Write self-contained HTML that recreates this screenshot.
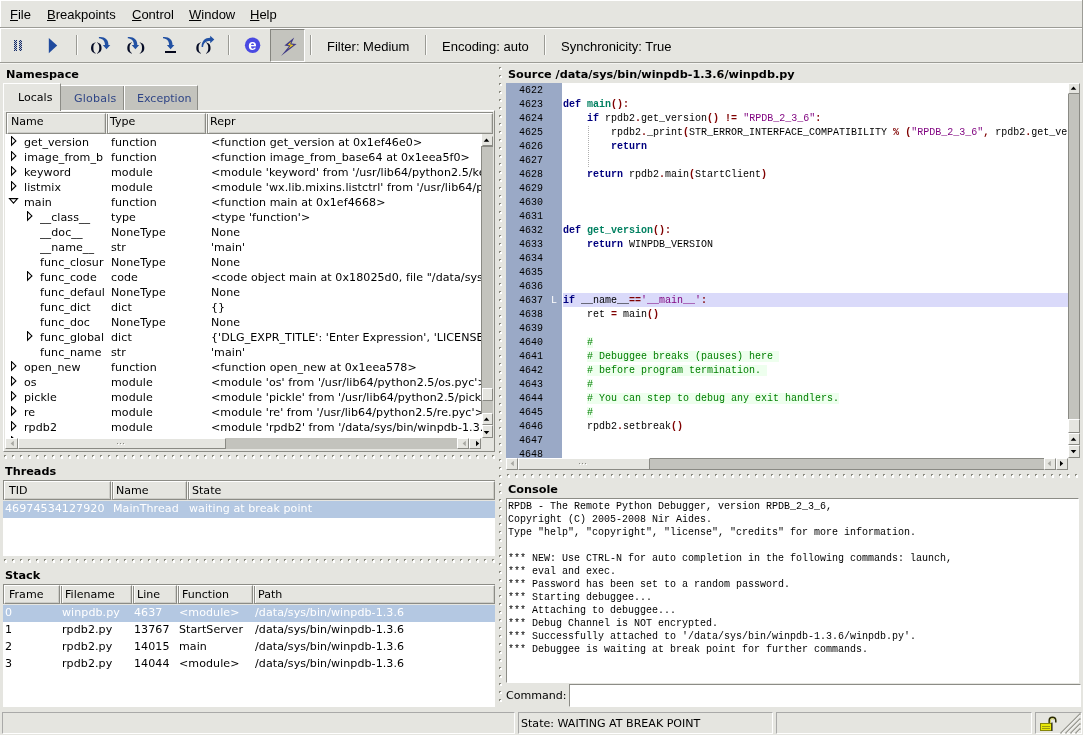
<!DOCTYPE html>
<html lang="en"><head><meta charset="utf-8"><title>Winpdb</title>
<style>
*{box-sizing:border-box;margin:0;padding:0}
html,body{width:1083px;height:735px;overflow:hidden;background:#e5e5e0}
body{position:relative;font-family:"DejaVu Sans","Liberation Sans",sans-serif;font-size:11.07px;color:#000;-webkit-font-smoothing:antialiased}
#app{position:absolute;left:0;top:0;width:1083px;height:735px;will-change:transform}
.abs{position:absolute}
.ui{font-family:"Liberation Sans",sans-serif;font-size:13px}
.lbl{position:absolute;font-weight:bold;font-size:11.25px;white-space:nowrap;line-height:14px}
.menu span{position:absolute;top:7px;line-height:15px;white-space:nowrap}
.menu u{text-decoration:underline;text-underline-offset:1px}
.hline{position:absolute;left:0;width:1083px;height:1px}
.tsep{position:absolute;top:35px;width:2px;height:20px;border-left:1px solid #9a9a94;border-right:1px solid #fbfbf9}
.tb{position:absolute;top:39px;line-height:15px;white-space:nowrap}
.hdr{position:absolute;height:20px;background:#e5e5e0;border:1px solid;border-color:#fff #8e8e88 #8e8e88 #fff;box-shadow:0 0 0 1px #8e8e88 inset}
.hcell{position:absolute;top:0;height:21px;border-top:1px solid #fff;border-left:1px solid #fff;border-bottom:1px solid #8c8c86;border-right:1px solid #8c8c86;background:#e5e5e0;box-shadow:inset -1px -1px 0 #cdcdc8;padding-left:3px;line-height:15px;white-space:nowrap;overflow:hidden}
.hcell.n{border-left-color:#f6f6f3;box-shadow:inset 1px 0 0 #8c8c86,inset 2px 0 0 #fafaf8,inset -1px -1px 0 #cdcdc8}
.white{position:absolute;background:#fff;overflow:hidden}
.row{position:absolute;left:0;white-space:nowrap;height:15px;line-height:15px;letter-spacing:0.07px}
.row span{position:absolute;top:0;white-space:nowrap}
.code{font-family:"Liberation Mono",monospace;font-size:10px;white-space:pre}
.cl{position:absolute;left:0;height:14px;line-height:14px;white-space:pre}
.k{color:#00007f;font-weight:bold}.f{color:#008060;font-weight:bold}.o{color:#7f0000;font-weight:bold}.s{color:#7f007f}.c{color:#007f00;background:#eeffee}
.sbv{position:absolute;width:13px;background:#c3c3bd}
.sbh{position:absolute;height:12px;background:#c3c3bd}
.btn{position:absolute;background:#e5e5e0;border:1px solid;border-color:#fff #8a8a84 #8a8a84 #fff}
.sashh{position:absolute;height:4px;background-image:linear-gradient(90deg,transparent 1px,#fff 1px,#fff 3px,transparent 3px),linear-gradient(90deg,#8a8a80 2px,transparent 2px);background-size:8px 3px,8px 2px;background-position:0 1px,0 0;background-repeat:repeat-x}
.sashv{position:absolute;width:3px;background-image:linear-gradient(180deg,transparent 1px,#fff 1px,#fff 3px,transparent 3px),linear-gradient(180deg,#8a8a80 2px,transparent 2px);background-size:2px 8px,2px 8px;background-position:1px 0,0 0;background-repeat:repeat-y}
.sf{position:absolute;top:712px;height:22px;border:1px solid;border-color:#a9a9a8 #fff #fff #a9a9a8}
</style></head>
<body>
<div id="app">
<div class="menu ui">
<span style="left:10px"><u>F</u>ile</span>
<span style="left:47px"><u>B</u>reakpoints</span>
<span style="left:132px"><u>C</u>ontrol</span>
<span style="left:189px"><u>W</u>indow</span>
<span style="left:250px"><u>H</u>elp</span>
</div>
<div class="hline" style="top:27px;background:#9c9c96"></div>
<div class="hline" style="top:28px;background:#fff"></div>
<div class="hline" style="top:62px;background:#9c9c96"></div>
<div class="hline" style="top:63px;background:#f4f4f1"></div>
<div class="hline" style="top:0;background:#fff"></div>
<div class="abs" style="left:0;top:0;width:1px;height:27px;background:#fff"></div><div class="abs" style="left:0;top:28px;width:1px;height:34px;background:#fff"></div>
<div class="abs" style="left:1082px;top:0;width:1px;height:63px;background:#9c9c96"></div>
<div class="tsep" style="left:76px"></div>
<div class="tsep" style="left:228px"></div>
<div class="abs" style="left:270px;top:29px;width:35px;height:33px;background:#c4c4be;border:1px solid;border-color:#85857f #fff #fff #85857f"></div>
<svg class="abs" style="left:0;top:28px" width="320" height="36" viewBox="0 28 320 36">
<defs><pattern id="dith" width="2" height="2" patternUnits="userSpaceOnUse"><rect width="2" height="2" fill="#c4c9d2"/><rect width="1" height="1" fill="#132a66"/><rect x="1" y="1" width="1" height="1" fill="#132a66"/></pattern></defs>
<rect x="14" y="40" width="3" height="11" fill="url(#dith)"/><rect x="19" y="40" width="3" height="11" fill="url(#dith)"/>
<path d="M48.8 38 L57.2 45.6 L48.8 53.2 Z" fill="#1f4a9e"/>
<text transform="translate(90.2 51.1) scale(1.5 1)" font-family="Liberation Serif,serif" font-weight="bold" font-size="11.7" fill="#060c26">(</text><text transform="translate(96.4 51.1) scale(1.5 1)" font-family="Liberation Serif,serif" font-weight="bold" font-size="11.7" fill="#060c26">)</text>
<path d="M98.9 37.1 C104.5 36.4 108.7 39.6 108.4 45.1 L110.3 45.1 L106.5 49.3 L102.8 45.1 L105 45.1 C105.1 41.2 102.8 38.7 98.9 38.3 Z" fill="#2251a3"/>
<text transform="translate(126.6 51.1) scale(1.5 1)" font-family="Liberation Serif,serif" font-weight="bold" font-size="11.7" fill="#060c26">(</text><text transform="translate(139.2 51.1) scale(1.5 1)" font-family="Liberation Serif,serif" font-weight="bold" font-size="11.7" fill="#060c26">)</text>
<path d="M98.9 37.1 C104.5 36.4 108.7 39.6 108.4 45.1 L110.3 45.1 L106.5 49.3 L102.8 45.1 L105 45.1 C105.1 41.2 102.8 38.7 98.9 38.3 Z" transform="translate(28.9 0)" fill="#2251a3"/>
<path d="M98.9 37.1 C104.5 36.4 108.7 39.6 108.4 45.1 L110.3 45.1 L106.5 49.3 L102.8 45.1 L105 45.1 C105.1 41.2 102.8 38.7 98.9 38.3 Z" transform="translate(64.1 0)" fill="#2251a3"/>
<rect x="165" y="51" width="11" height="2" fill="#05081c"/>
<text transform="translate(195.4 51.1) scale(1.5 1)" font-family="Liberation Serif,serif" font-weight="bold" font-size="11.7" fill="#060c26">(</text><text transform="translate(205.4 51.1) scale(1.5 1)" font-family="Liberation Serif,serif" font-weight="bold" font-size="11.7" fill="#060c26">)</text>
<path d="M201.6 46.9 C201.6 41 205 37.8 210.2 37.8 L210.2 35.7 L214.3 39.5 L210.2 43.3 L210.2 41.1 C206 41.1 203.5 43 203.1 46.9 Z" fill="#2251a3"/>
<circle cx="252.6" cy="45.3" r="7.7" fill="#4a4ae2"/><text x="252.5" y="49.7" text-anchor="middle" font-family="Liberation Sans,sans-serif" font-weight="bold" font-size="15" fill="#fff">e</text>
<path d="M294.2 37.4 L284.4 45.4 L289 46.2 L281 56 L296.6 44.1 L291.4 43.4 Z" fill="#3f3a86"/>
<path d="M291.2 41.6 L287.6 44.9 L290.6 45.5 L288 49 L293.6 44.9 L290 44.2 Z" fill="#f2cf1c"/>
</svg>
<div class="tsep" style="left:310px"></div>
<div class="tb ui" style="left:327px">Filter: Medium</div>
<div class="tsep" style="left:425px"></div>
<div class="tb ui" style="left:442px">Encoding: auto</div>
<div class="tsep" style="left:544px"></div>
<div class="tb ui" style="left:561px">Synchronicity: True</div>
<div class="lbl" style="left:6px;top:68px">Namespace</div>
<div class="abs" style="left:60px;top:85px;width:138px;height:25px;background:#c3c3bd;border-top:1px solid #fff;border-right:1px solid #8c8c86"></div>
<div class="abs" style="left:123px;top:86px;width:1px;height:24px;background:#8c8c86"></div><div class="abs" style="left:124px;top:86px;width:1px;height:24px;background:#fff"></div>
<div class="abs" style="left:3px;top:110px;width:492px;height:342px;border:1px solid;border-color:#fff #8c8c86 #8c8c86 #fff"></div>
<div class="abs" style="left:4px;top:111px;width:490px;height:1px;background:#f2f2ef"></div>
<div class="abs" style="left:3px;top:83px;width:58px;height:28px;background:#e5e5e0;border:1px solid;border-color:#fff #8c8c86 #e5e5e0 #fff;border-bottom:none"></div>
<div class="abs" style="left:18px;top:91px;line-height:14px">Locals</div>
<div class="abs" style="left:74px;top:92px;line-height:14px;color:#2f4586;letter-spacing:0.2px">Globals</div>
<div class="abs" style="left:137px;top:92px;line-height:14px;color:#2f4586">Exception</div>
<div class="abs" style="left:6px;top:112px;width:487px;height:22px;border-top:1px solid #8c8c86;border-left:1px solid #8c8c86"><div class="hcell" style="left:0px;width:99px;height:21px;padding-left:3px;line-height:15px">Name</div><div class="hcell n" style="left:99px;width:100px;height:21px;padding-left:3px;line-height:15px">Type</div><div class="hcell n" style="left:199px;width:287px;height:21px;padding-left:3px;line-height:15px">Repr</div></div>
<div class="white" style="left:5px;top:134px;width:477px;height:304px">
<div class="row" style="top:1px"><svg class="abs" style="left:6px;top:1px" width="7" height="11" viewBox="0 0 7 11"><path d="M0.5 0.6 L4.9 4.9 L0.5 9.2 Z" fill="none" stroke="#000" stroke-width="1.1"/></svg><span style="left:19px;width:81px;overflow:hidden">get_version</span><span style="left:106px">function</span><span style="left:206px">&lt;function get_version at 0x1ef46e0&gt;</span></div>
<div class="row" style="top:16px"><svg class="abs" style="left:6px;top:1px" width="7" height="11" viewBox="0 0 7 11"><path d="M0.5 0.6 L4.9 4.9 L0.5 9.2 Z" fill="none" stroke="#000" stroke-width="1.1"/></svg><span style="left:19px;width:81px;overflow:hidden">image_from_b</span><span style="left:106px">function</span><span style="left:206px">&lt;function image_from_base64 at 0x1eea5f0&gt;</span></div>
<div class="row" style="top:31px"><svg class="abs" style="left:6px;top:1px" width="7" height="11" viewBox="0 0 7 11"><path d="M0.5 0.6 L4.9 4.9 L0.5 9.2 Z" fill="none" stroke="#000" stroke-width="1.1"/></svg><span style="left:19px;width:81px;overflow:hidden">keyword</span><span style="left:106px">module</span><span style="left:206px">&lt;module &#x27;keyword&#x27; from &#x27;/usr/lib64/python2.5/keyword.pyc&#x27;&gt;</span></div>
<div class="row" style="top:46px"><svg class="abs" style="left:6px;top:1px" width="7" height="11" viewBox="0 0 7 11"><path d="M0.5 0.6 L4.9 4.9 L0.5 9.2 Z" fill="none" stroke="#000" stroke-width="1.1"/></svg><span style="left:19px;width:81px;overflow:hidden">listmix</span><span style="left:106px">module</span><span style="left:206px">&lt;module &#x27;wx.lib.mixins.listctrl&#x27; from &#x27;/usr/lib64/python2.5/site-packages</span></div>
<div class="row" style="top:61px"><svg class="abs" style="left:3px;top:3px" width="12" height="7" viewBox="0 0 12 7"><path d="M1.5 0.6 L9.5 0.6 L5.5 5.2 Z" fill="none" stroke="#000" stroke-width="1.1"/></svg><span style="left:19px;width:81px;overflow:hidden">main</span><span style="left:106px">function</span><span style="left:206px">&lt;function main at 0x1ef4668&gt;</span></div>
<div class="row" style="top:76px"><svg class="abs" style="left:22px;top:1px" width="7" height="11" viewBox="0 0 7 11"><path d="M0.5 0.6 L4.9 4.9 L0.5 9.2 Z" fill="none" stroke="#000" stroke-width="1.1"/></svg><span style="left:35px;width:65px;overflow:hidden">__class__</span><span style="left:106px">type</span><span style="left:206px">&lt;type &#x27;function&#x27;&gt;</span></div>
<div class="row" style="top:91px"><span style="left:35px;width:65px;overflow:hidden">__doc__</span><span style="left:106px">NoneType</span><span style="left:206px">None</span></div>
<div class="row" style="top:106px"><span style="left:35px;width:65px;overflow:hidden">__name__</span><span style="left:106px">str</span><span style="left:206px">&#x27;main&#x27;</span></div>
<div class="row" style="top:121px"><span style="left:35px;width:65px;overflow:hidden">func_closur</span><span style="left:106px">NoneType</span><span style="left:206px">None</span></div>
<div class="row" style="top:136px"><svg class="abs" style="left:22px;top:1px" width="7" height="11" viewBox="0 0 7 11"><path d="M0.5 0.6 L4.9 4.9 L0.5 9.2 Z" fill="none" stroke="#000" stroke-width="1.1"/></svg><span style="left:35px;width:65px;overflow:hidden">func_code</span><span style="left:106px">code</span><span style="left:206px">&lt;code object main at 0x18025d0, file &quot;/data/sys/bin/winpdb</span></div>
<div class="row" style="top:151px"><span style="left:35px;width:65px;overflow:hidden">func_defaul</span><span style="left:106px">NoneType</span><span style="left:206px">None</span></div>
<div class="row" style="top:166px"><span style="left:35px;width:65px;overflow:hidden">func_dict</span><span style="left:106px">dict</span><span style="left:206px">{}</span></div>
<div class="row" style="top:181px"><span style="left:35px;width:65px;overflow:hidden">func_doc</span><span style="left:106px">NoneType</span><span style="left:206px">None</span></div>
<div class="row" style="top:196px"><svg class="abs" style="left:22px;top:1px" width="7" height="11" viewBox="0 0 7 11"><path d="M0.5 0.6 L4.9 4.9 L0.5 9.2 Z" fill="none" stroke="#000" stroke-width="1.1"/></svg><span style="left:35px;width:65px;overflow:hidden">func_global</span><span style="left:106px">dict</span><span style="left:206px">{&#x27;DLG_EXPR_TITLE&#x27;: &#x27;Enter Expression&#x27;, &#x27;LICENSE_NOTICE&#x27;: &#x27;</span></div>
<div class="row" style="top:211px"><span style="left:35px;width:65px;overflow:hidden">func_name</span><span style="left:106px">str</span><span style="left:206px">&#x27;main&#x27;</span></div>
<div class="row" style="top:226px"><svg class="abs" style="left:6px;top:1px" width="7" height="11" viewBox="0 0 7 11"><path d="M0.5 0.6 L4.9 4.9 L0.5 9.2 Z" fill="none" stroke="#000" stroke-width="1.1"/></svg><span style="left:19px;width:81px;overflow:hidden">open_new</span><span style="left:106px">function</span><span style="left:206px">&lt;function open_new at 0x1eea578&gt;</span></div>
<div class="row" style="top:241px"><svg class="abs" style="left:6px;top:1px" width="7" height="11" viewBox="0 0 7 11"><path d="M0.5 0.6 L4.9 4.9 L0.5 9.2 Z" fill="none" stroke="#000" stroke-width="1.1"/></svg><span style="left:19px;width:81px;overflow:hidden">os</span><span style="left:106px">module</span><span style="left:206px">&lt;module &#x27;os&#x27; from &#x27;/usr/lib64/python2.5/os.pyc&#x27;&gt;</span></div>
<div class="row" style="top:256px"><svg class="abs" style="left:6px;top:1px" width="7" height="11" viewBox="0 0 7 11"><path d="M0.5 0.6 L4.9 4.9 L0.5 9.2 Z" fill="none" stroke="#000" stroke-width="1.1"/></svg><span style="left:19px;width:81px;overflow:hidden">pickle</span><span style="left:106px">module</span><span style="left:206px">&lt;module &#x27;pickle&#x27; from &#x27;/usr/lib64/python2.5/pickle.pyc&#x27;&gt;</span></div>
<div class="row" style="top:271px"><svg class="abs" style="left:6px;top:1px" width="7" height="11" viewBox="0 0 7 11"><path d="M0.5 0.6 L4.9 4.9 L0.5 9.2 Z" fill="none" stroke="#000" stroke-width="1.1"/></svg><span style="left:19px;width:81px;overflow:hidden">re</span><span style="left:106px">module</span><span style="left:206px">&lt;module &#x27;re&#x27; from &#x27;/usr/lib64/python2.5/re.pyc&#x27;&gt;</span></div>
<div class="row" style="top:286px"><svg class="abs" style="left:6px;top:1px" width="7" height="11" viewBox="0 0 7 11"><path d="M0.5 0.6 L4.9 4.9 L0.5 9.2 Z" fill="none" stroke="#000" stroke-width="1.1"/></svg><span style="left:19px;width:81px;overflow:hidden">rpdb2</span><span style="left:106px">module</span><span style="left:206px">&lt;module &#x27;rpdb2&#x27; from &#x27;/data/sys/bin/winpdb-1.3.6/rpdb2.py&#x27;&gt;</span></div>
<div class="row" style="top:301px"><svg class="abs" style="left:6px;top:1px" width="7" height="11" viewBox="0 0 7 11"><path d="M0.5 0.6 L4.9 4.9 L0.5 9.2 Z" fill="none" stroke="#000" stroke-width="1.1"/></svg><span style="left:19px;width:81px;overflow:hidden">socket</span><span style="left:106px">module</span><span style="left:206px">&lt;module &#x27;socket&#x27; from &#x27;/usr/lib64/python2.5/socket.pyc&#x27;&gt;</span></div>
</div>
<div class="sbv" style="left:481px;top:146px;width:12px;height:267px;border-left:1px solid #8a8a84;border-top:1px solid #8a8a84"></div>
<div class="btn" style="left:482px;top:136px;width:11px;height:10px;border-top-color:#e5e5e0;border-left-color:#e5e5e0"></div>
<div class="btn" style="left:482px;top:388px;width:11px;height:13px"></div>
<div class="btn" style="left:482px;top:413px;width:11px;height:12px"></div>
<div class="btn" style="left:482px;top:425px;width:11px;height:13px"></div>
<svg class="abs" style="left:483px;top:137px" width="7" height="7" viewBox="0 0 7 7"><path d="M0.7 4.8 L3.5 1.6 L6.3 4.8 Z" fill="#000"/></svg>
<svg class="abs" style="left:483px;top:416px" width="7" height="7" viewBox="0 0 7 7"><path d="M0.7 4.8 L3.5 1.6 L6.3 4.8 Z" fill="#000"/></svg>
<svg class="abs" style="left:483px;top:429px" width="7" height="7" viewBox="0 0 7 7"><path d="M0.7 2 L3.5 5.2 L6.3 2 Z" fill="#000"/></svg>
<div class="sbh" style="left:5px;top:438px;width:477px;height:11px"></div>
<div class="btn" style="left:5px;top:438px;width:13px;height:11px"></div>
<div class="btn" style="left:18px;top:438px;width:208px;height:11px"></div>
<div class="btn" style="left:457px;top:438px;width:12px;height:11px"></div>
<div class="btn" style="left:469px;top:438px;width:12px;height:11px"></div>
<svg class="abs" style="left:9px;top:440px" width="7" height="7" viewBox="0 0 7 7"><path d="M4.8 0.7 L1.6 3.5 L4.8 6.3 Z" fill="#a8a8a2"/></svg>
<svg class="abs" style="left:461px;top:440px" width="7" height="7" viewBox="0 0 7 7"><path d="M4.8 0.7 L1.6 3.5 L4.8 6.3 Z" fill="#a8a8a2"/></svg>
<svg class="abs" style="left:474px;top:440px" width="7" height="7" viewBox="0 0 7 7"><path d="M2 0.7 L5.2 3.5 L2 6.3 Z" fill="#000"/></svg>
<svg class="abs" style="left:117px;top:443px" width="9" height="2" viewBox="0 0 9 2"><path d="M0 0.5h1M3 0.5h1M6 0.5h1" stroke="#8a8a84"/><path d="M1 1.5h1M4 1.5h1M7 1.5h1" stroke="#fff"/></svg>
<div class="abs" style="left:481px;top:438px;width:13px;height:13px;background:#e5e5e0"></div>
<div class="sashh" style="left:4px;top:455px;width:491px"></div>
<div class="sashh" style="left:4px;top:559px;width:491px"></div>
<div class="sashv" style="left:499px;top:67px;height:640px"></div>
<div class="sashh" style="left:507px;top:474px;width:571px"></div>
<div class="lbl" style="left:5px;top:465px">Threads</div>
<div class="abs" style="left:3px;top:480px;width:492px;height:20px;border-top:1px solid #8c8c86;border-left:1px solid #8c8c86"><div class="hcell" style="left:0px;width:107px;height:19px;padding-left:4px;line-height:17px">TID</div><div class="hcell n" style="left:107px;width:76px;height:19px;padding-left:4px;line-height:17px">Name</div><div class="hcell n" style="left:183px;width:308px;height:19px;padding-left:4px;line-height:17px">State</div></div>
<div class="white" style="left:3px;top:501px;width:492px;height:55px">
<div class="row" style="top:0;width:492px;height:17px;line-height:16px;background:#b4c8e2;color:#fff"><span style="left:2px">46974534127920</span><span style="left:110px">MainThread</span><span style="left:186px">waiting at break point</span></div>
</div>
<div class="lbl" style="left:5px;top:569px">Stack</div>
<div class="abs" style="left:3px;top:584px;width:492px;height:20px;border-top:1px solid #8c8c86;border-left:1px solid #8c8c86"><div class="hcell" style="left:0px;width:56px;height:19px;padding-left:4px;line-height:17px">Frame</div><div class="hcell n" style="left:56px;width:72px;height:19px;padding-left:4px;line-height:17px">Filename</div><div class="hcell n" style="left:128px;width:45px;height:19px;padding-left:4px;line-height:17px">Line</div><div class="hcell n" style="left:173px;width:76px;height:19px;padding-left:4px;line-height:17px">Function</div><div class="hcell n" style="left:249px;width:242px;height:19px;padding-left:4px;line-height:17px">Path</div></div>
<div class="white" style="left:3px;top:605px;width:492px;height:102px">
<div class="row" style="top:0px;width:492px;height:17px;line-height:16px;background:#b4c8e2;color:#fff;"><span style="left:2px">0</span><span style="left:59px">winpdb.py</span><span style="left:131px">4637</span><span style="left:176px">&lt;module&gt;</span><span style="left:252px">/data/sys/bin/winpdb-1.3.6</span></div>
<div class="row" style="top:17px;width:492px;height:17px;line-height:16px;"><span style="left:2px">1</span><span style="left:59px">rpdb2.py</span><span style="left:131px">13767</span><span style="left:176px">StartServer</span><span style="left:252px">/data/sys/bin/winpdb-1.3.6</span></div>
<div class="row" style="top:34px;width:492px;height:17px;line-height:16px;"><span style="left:2px">2</span><span style="left:59px">rpdb2.py</span><span style="left:131px">14015</span><span style="left:176px">main</span><span style="left:252px">/data/sys/bin/winpdb-1.3.6</span></div>
<div class="row" style="top:51px;width:492px;height:17px;line-height:16px;"><span style="left:2px">3</span><span style="left:59px">rpdb2.py</span><span style="left:131px">14044</span><span style="left:176px">&lt;module&gt;</span><span style="left:252px">/data/sys/bin/winpdb-1.3.6</span></div>
</div>
<div class="lbl" style="left:508px;top:68px">Source /data/sys/bin/winpdb-1.3.6/winpdb.py</div>
<div class="white code" style="left:506px;top:83px;width:562px;height:375px">
<div class="abs" style="left:0;top:0;width:56px;height:375px;background:#9aa9c6"></div>
<div class="cl" style="left:13px;top:1px">4622</div>
<div class="cl" style="left:13px;top:15px">4623</div>
<div class="cl" style="left:57px;top:15px"><span class="k">def</span> <span class="f">main</span><span class="o">():</span></div>
<div class="cl" style="left:13px;top:29px">4624</div>
<div class="cl" style="left:57px;top:29px">    <span class="k">if</span> rpdb2<span class="o">.</span>get_version<span class="o">()</span> <span class="o">!=</span> <span class="s">&quot;RPDB_2_3_6&quot;</span><span class="o">:</span></div>
<div class="cl" style="left:13px;top:43px">4625</div>
<div class="cl" style="left:57px;top:43px">        rpdb2<span class="o">.</span>_print<span class="o">(</span>STR_ERROR_INTERFACE_COMPATIBILITY <span class="o">%</span> <span class="o">(</span><span class="s">&quot;RPDB_2_3_6&quot;</span><span class="o">,</span> rpdb2<span class="o">.</span>get_version<span class="o">()))</span></div>
<div class="cl" style="left:13px;top:57px">4626</div>
<div class="cl" style="left:57px;top:57px">        <span class="k">return</span></div>
<div class="cl" style="left:13px;top:71px">4627</div>
<div class="cl" style="left:13px;top:85px">4628</div>
<div class="cl" style="left:57px;top:85px">    <span class="k">return</span> rpdb2<span class="o">.</span>main<span class="o">(</span>StartClient<span class="o">)</span></div>
<div class="cl" style="left:13px;top:99px">4629</div>
<div class="cl" style="left:13px;top:113px">4630</div>
<div class="cl" style="left:13px;top:127px">4631</div>
<div class="cl" style="left:13px;top:141px">4632</div>
<div class="cl" style="left:57px;top:141px"><span class="k">def</span> <span class="f">get_version</span><span class="o">():</span></div>
<div class="cl" style="left:13px;top:155px">4633</div>
<div class="cl" style="left:57px;top:155px">    <span class="k">return</span> WINPDB_VERSION</div>
<div class="cl" style="left:13px;top:169px">4634</div>
<div class="cl" style="left:13px;top:183px">4635</div>
<div class="cl" style="left:13px;top:197px">4636</div>
<div class="abs" style="left:57px;top:210px;width:505px;height:14px;background:#dadafa"></div>
<div class="cl" style="left:45px;top:211px;color:#fff">L</div>
<div class="cl" style="left:13px;top:211px">4637</div>
<div class="cl" style="left:57px;top:211px"><span class="k">if</span> __name__<span class="o">==</span><span class="s">&#x27;__main__&#x27;</span><span class="o">:</span></div>
<div class="cl" style="left:13px;top:225px">4638</div>
<div class="cl" style="left:57px;top:225px">    ret <span class="o">=</span> main<span class="o">()</span></div>
<div class="cl" style="left:13px;top:239px">4639</div>
<div class="cl" style="left:13px;top:253px">4640</div>
<div class="cl" style="left:57px;top:253px">    <span class="c">#</span></div>
<div class="cl" style="left:13px;top:267px">4641</div>
<div class="cl" style="left:57px;top:267px">    <span class="c"># Debuggee breaks (pauses) here </span></div>
<div class="cl" style="left:13px;top:281px">4642</div>
<div class="cl" style="left:57px;top:281px">    <span class="c"># before program termination. </span></div>
<div class="cl" style="left:13px;top:295px">4643</div>
<div class="cl" style="left:57px;top:295px">    <span class="c">#</span></div>
<div class="cl" style="left:13px;top:309px">4644</div>
<div class="cl" style="left:57px;top:309px">    <span class="c"># You can step to debug any exit handlers.</span></div>
<div class="cl" style="left:13px;top:323px">4645</div>
<div class="cl" style="left:57px;top:323px">    <span class="c">#</span></div>
<div class="cl" style="left:13px;top:337px">4646</div>
<div class="cl" style="left:57px;top:337px">    rpdb2<span class="o">.</span>setbreak<span class="o">()</span></div>
<div class="cl" style="left:13px;top:351px">4647</div>
<div class="cl" style="left:13px;top:365px">4648</div>
<div class="abs" style="left:82px;top:43px;width:1px;height:41px;background-image:linear-gradient(#b0b0b0 1px,transparent 1px);background-size:1px 2px"></div>
</div>
<div class="sbv" style="left:1068px;top:83px;width:12px;height:375px;border-left:1px solid #8a8a84;border-right:1px solid #8a8a84"></div>
<div class="btn" style="left:1068px;top:83px;width:12px;height:11px"></div>
<div class="btn" style="left:1068px;top:419px;width:12px;height:14px"></div>
<div class="btn" style="left:1068px;top:433px;width:12px;height:12px"></div>
<div class="btn" style="left:1068px;top:445px;width:12px;height:13px"></div>
<svg class="abs" style="left:1070px;top:85px" width="7" height="7" viewBox="0 0 7 7"><path d="M0.7 4.8 L3.5 1.6 L6.3 4.8 Z" fill="#000"/></svg>
<svg class="abs" style="left:1070px;top:436px" width="7" height="7" viewBox="0 0 7 7"><path d="M0.7 4.8 L3.5 1.6 L6.3 4.8 Z" fill="#000"/></svg>
<svg class="abs" style="left:1070px;top:448px" width="7" height="7" viewBox="0 0 7 7"><path d="M0.7 2 L3.5 5.2 L6.3 2 Z" fill="#000"/></svg>
<div class="sbh" style="left:506px;top:458px;width:562px;height:12px;border-top:1px solid #8a8a84;border-bottom:1px solid #8a8a84"></div>
<div class="btn" style="left:506px;top:458px;width:12px;height:12px"></div>
<div class="btn" style="left:518px;top:458px;width:132px;height:12px"></div>
<div class="btn" style="left:1044px;top:458px;width:12px;height:12px"></div>
<div class="btn" style="left:1056px;top:458px;width:12px;height:12px"></div>
<svg class="abs" style="left:509px;top:460px" width="7" height="7" viewBox="0 0 7 7"><path d="M4.8 0.7 L1.6 3.5 L4.8 6.3 Z" fill="#a8a8a2"/></svg>
<svg class="abs" style="left:1046px;top:460px" width="7" height="7" viewBox="0 0 7 7"><path d="M4.8 0.7 L1.6 3.5 L4.8 6.3 Z" fill="#a8a8a2"/></svg>
<svg class="abs" style="left:1058px;top:460px" width="7" height="7" viewBox="0 0 7 7"><path d="M2 0.7 L5.2 3.5 L2 6.3 Z" fill="#000"/></svg>
<svg class="abs" style="left:579px;top:463px" width="9" height="2" viewBox="0 0 9 2"><path d="M0 0.5h1M3 0.5h1M6 0.5h1" stroke="#8a8a84"/><path d="M1 1.5h1M4 1.5h1M7 1.5h1" stroke="#fff"/></svg>
<div class="lbl" style="left:508px;top:483px">Console</div>
<div class="abs" style="left:506px;top:498px;width:573px;height:185px;border:1px solid;border-color:#8c8c86 #fff #fff #8c8c86;background:#fff"></div>
<div class="abs code" style="left:508px;top:500px;width:570px;height:182px;overflow:hidden">
<div class="cl" style="left:0px;top:0px;height:13px;line-height:13px">RPDB - The Remote Python Debugger, version RPDB_2_3_6,</div>
<div class="cl" style="left:0px;top:13px;height:13px;line-height:13px">Copyright (C) 2005-2008 Nir Aides.</div>
<div class="cl" style="left:0px;top:26px;height:13px;line-height:13px">Type &quot;help&quot;, &quot;copyright&quot;, &quot;license&quot;, &quot;credits&quot; for more information.</div>
<div class="cl" style="left:0px;top:39px;height:13px;line-height:13px"></div>
<div class="cl" style="left:0px;top:52px;height:13px;line-height:13px">*** NEW: Use CTRL-N for auto completion in the following commands: launch,</div>
<div class="cl" style="left:0px;top:65px;height:13px;line-height:13px">*** eval and exec.</div>
<div class="cl" style="left:0px;top:78px;height:13px;line-height:13px">*** Password has been set to a random password.</div>
<div class="cl" style="left:0px;top:91px;height:13px;line-height:13px">*** Starting debuggee...</div>
<div class="cl" style="left:0px;top:104px;height:13px;line-height:13px">*** Attaching to debuggee...</div>
<div class="cl" style="left:0px;top:117px;height:13px;line-height:13px">*** Debug Channel is NOT encrypted.</div>
<div class="cl" style="left:0px;top:130px;height:13px;line-height:13px">*** Successfully attached to &#x27;/data/sys/bin/winpdb-1.3.6/winpdb.py&#x27;.</div>
<div class="cl" style="left:0px;top:143px;height:13px;line-height:13px">*** Debuggee is waiting at break point for further commands.</div>
</div>
<div class="abs" style="left:506px;top:689px;line-height:14px">Command:</div>
<div class="abs" style="left:569px;top:684px;width:512px;height:23px;background:#fff;border:1px solid;border-color:#8c8c86 #fff #fff #8c8c86"></div>
<div class="sf" style="left:2px;width:513px"></div>
<div class="sf" style="left:518px;width:255px"></div>
<div class="sf" style="left:776px;width:256px"></div>
<div class="sf" style="left:1035px;width:47px"></div>
<div class="abs" style="left:521px;top:717px;line-height:14px">State: WAITING AT BREAK POINT</div>
<svg class="abs" style="left:1035px;top:712px" width="48" height="23" viewBox="1035 712 48 23">
<path d="M1049.2 723.5 V720.6 a3.3 3.3 0 0 1 6.6 0 V722.6" fill="none" stroke="#2a2a00" stroke-width="1.5"/>
<path d="M1050.3 723 V720.8 a2.2 2.2 0 0 1 3.6 -1.6" fill="none" stroke="#c8c820" stroke-width="0.8"/>
<rect x="1040.5" y="723.5" width="11" height="7" fill="#e8e808" stroke="#85850a"/>
<path d="M1042 726.5h8M1042 728.5h8" stroke="#9a9a10" stroke-width="1"/>
<path d="M1052 722.5V731" stroke="#111" stroke-width="1"/>
<path d="M1060.5 733.5 L1080.5 713.5 M1065.5 733.5 L1080.5 718.5 M1070.5 733.5 L1080.5 723.5 M1075.5 733.5 L1080.5 728.5" stroke="#9c9c94" stroke-width="1.7"/>
<path d="M1061.8 733.5 L1080.5 714.8 M1066.8 733.5 L1080.5 719.8 M1071.8 733.5 L1080.5 724.8 M1076.8 733.5 L1080.5 729.8" stroke="#fff" stroke-width="1"/>
</svg>
</div>
</body></html>
